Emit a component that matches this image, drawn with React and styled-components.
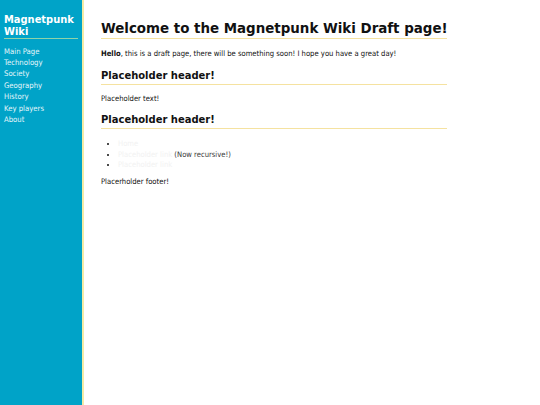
import React from "react";
import styled, { createGlobalStyle } from "styled-components";

const Global = createGlobalStyle`
  html, body { margin: 0; padding: 0; background: #fff; }
  body { font-family: "DejaVu Sans Condensed", "DejaVu Sans", Verdana, sans-serif; }
`;

const Page = styled.div`
  display: flex;
  min-height: 405px;
`;

const Sidebar = styled.nav`
  width: 84px;
  flex-shrink: 0;
  box-sizing: border-box;
  background: #00a3c8;
  border-right: 2px solid #f3eba6;
  padding: 14px 4px 0 4px;
`;

const SideTitle = styled.div`
  color: #fff;
  font-weight: bold;
  font-size: 11px;
  line-height: 12px;
  border-bottom: 1px solid #8fd3a8;
`;

const NavList = styled.ul`
  list-style: none;
  margin: 6.5px 0 0;
  padding: 0;
`;

const NavItem = styled.li`
  color: #e6f6fb;
  font-size: 7.7px;
  line-height: 11.4px;
`;

const Main = styled.main`
  padding: 19px 0 0 17px;
  width: 346px;
`;

const H1 = styled.h1`
  font-size: 14.9px;
  line-height: 18px;
  font-weight: bold;
  margin: 0 0 10px;
  padding-bottom: 1px;
  border-bottom: 1px solid #f5e2a0;
  color: #111;
  white-space: nowrap;
`;

const H2 = styled.h2`
  font-size: 11.1px;
  line-height: 14px;
  font-weight: bold;
  margin: 0 0 9px;
  padding: 1px 0 1px;
  border-bottom: 1px solid #f5e2a0;
  color: #111;
`;

const P = styled.p`
  font-size: 7.6px;
  line-height: 10px;
  margin: 0 0 ${(p) => p.$gap ?? 9}px;
  color: #111;
`;

const List = styled.ul`
  margin: 10px 0 6px;
  padding-left: 17px;
  font-size: 7.6px;
  line-height: 10.5px;
  color: #111;
`;

const Link = styled.a`
  color: #f2f2f2;
  text-decoration: none;
`;

const Note = styled.span`
  color: #3a3a3a;
`;

export default function App() {
  return (
    <>
      <Global />
      <Page>
        <Sidebar>
          <SideTitle>Magnetpunk<br />Wiki</SideTitle>
          <NavList>
            {["Main Page", "Technology", "Society", "Geography", "History", "Key players", "About"].map((n) => (
              <NavItem key={n}>{n}</NavItem>
            ))}
          </NavList>
        </Sidebar>
        <Main>
          <H1>Welcome to the Magnetpunk Wiki Draft page!</H1>
          <P><b>Hello</b>, this is a draft page, there will be something soon! I hope you have a great day!</P>
          <H2>Placeholder header!</H2>
          <P $gap={8}>Placeholder text!</P>
          <H2>Placeholder header!</H2>
          <List>
            <li><Link href="#">Home</Link></li>
            <li><Link href="#">Placeholder link</Link> <Note>(Now recursive!)</Note></li>
            <li><Link href="#">Placeholder link</Link></li>
          </List>
          <P>Placerholder footer!</P>
        </Main>
      </Page>
    </>
  );
}
